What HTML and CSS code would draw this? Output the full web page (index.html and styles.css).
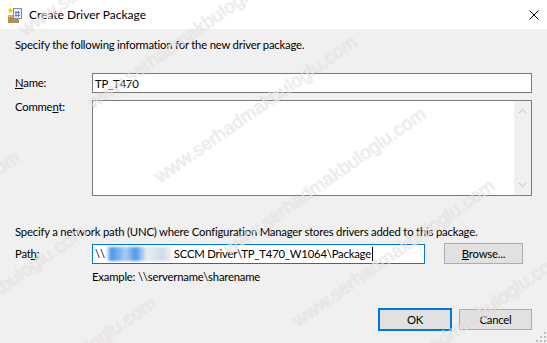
FILE: index.html
```html
<!DOCTYPE html>
<html lang="en">
<head>
    <meta charset="UTF-8">
    <title>Create Driver Package</title>
    <link rel="stylesheet" href="styles.css">
</head>
<body>
    <div class="window">
        <header class="titlebar">
            <svg class="app-icon" width="16" height="16" viewBox="0 0 16 16">
                <rect x="1" y="8" width="11" height="8" fill="#b98d52"/>
                <rect x="1" y="8" width="11" height="2" fill="#d9b47a"/>
                <rect x="6.5" y="1.5" width="8" height="10" fill="#eef3f9" stroke="#7d8fa8"/>
                <path d="M9 4v6M11.5 4v6M8 5.5h5M8 8.5h5" stroke="#4f78b8" stroke-width="0.9"/>
                <path d="M3.5 0.5l0.9 2 2.1 0.2-1.6 1.4 0.5 2.1-1.9-1.1-1.9 1.1 0.5-2.1L0.5 2.7l2.1-0.2z" fill="#f6c400"/>
            </svg>
            <span class="title">Create Driver Package</span>
            <svg class="close" width="10" height="10" viewBox="0 0 10 10">
                <path d="M0.5 0.5l9 9M9.5 0.5l-9 9" stroke="#000" stroke-width="1"/>
            </svg>
        </header>

        <main class="content">
            <p class="intro">Specify the following information for the new driver package.</p>

            <div class="row row-name">
                <label class="label"><u>N</u>ame:</label>
                <div class="textbox">TP_T470</div>
            </div>

            <div class="row row-comment">
                <label class="label">Comme<u>n</u>t:</label>
                <div class="textarea">
                    <div class="scrollbar">
                        <svg class="arrow" width="17" height="17" viewBox="0 0 17 17">
                            <path d="M5 10l3.5-3.5L12 10" fill="none" stroke="#c4c4c4" stroke-width="1"/>
                        </svg>
                        <svg class="arrow" width="17" height="17" viewBox="0 0 17 17">
                            <path d="M5 7l3.5 3.5L12 7" fill="none" stroke="#c4c4c4" stroke-width="1"/>
                        </svg>
                    </div>
                </div>
            </div>

            <p class="intro path-intro">Specify a network path (UNC) where Configuration Manager stores drivers added to this package.</p>

            <div class="row row-path">
                <label class="label">Pat<u>h</u>:</label>
                <div class="textbox focused">\\<span class="masked"></span>SCCM Driver\TP_T470_W1064\Package<span class="caret"></span></div>
                <button class="btn browse" type="button"><u>B</u>rowse...</button>
            </div>

            <p class="example">Example: \\servername\sharename</p>

            <div class="actions">
                <button class="btn default" type="button">OK</button>
                <button class="btn" type="button">Cancel</button>
            </div>
        </main>

        <svg class="grip" width="10" height="10" viewBox="0 0 10 10">
            <rect x="8" y="0" width="2" height="2" fill="#bcbcbc"/>
            <rect x="4" y="4" width="2" height="2" fill="#bcbcbc"/>
            <rect x="8" y="4" width="2" height="2" fill="#bcbcbc"/>
            <rect x="0" y="8" width="2" height="2" fill="#bcbcbc"/>
            <rect x="4" y="8" width="2" height="2" fill="#bcbcbc"/>
            <rect x="8" y="8" width="2" height="2" fill="#bcbcbc"/>
        </svg>

        <!-- site watermark stamped over the screenshot -->
        <div class="watermark">
            <span class="wm wm-1">www.serhadmakbuloglu.com</span>
            <span class="wm wm-2">www.serhadmakbuloglu.com</span>
            <span class="wm wm-3">www.serhadmakbuloglu.com</span>
            <span class="wm wm-4">www.serhadmakbuloglu.com</span>
            <span class="wm wm-5">www.serhadmakbuloglu.com</span>
            <span class="wm wm-6">www.serhadmakbuloglu.com</span>
            <span class="wm wm-7">www.serhadmakbuloglu.com</span>
            <span class="wm wm-8">www.serhadmakbuloglu.com</span>
            <span class="wm wm-9">www.serhadmakbuloglu.com</span>
        </div>
    </div>
</body>
</html>
```

FILE: styles.css
```css
* {
    margin: 0;
    padding: 0;
    box-sizing: border-box;
}

body {
    font-family: Lato, "Liberation Sans", Arial, sans-serif;
    font-size: 11.3px;
    letter-spacing: -0.2px;
    color: #000;
    background: #f0f0f0;
}

.window {
    position: relative;
    width: 547px;
    height: 343px;
    overflow: hidden;
    background: #f0f0f0;
}

.titlebar {
    display: flex;
    align-items: center;
    height: 29px;
    padding-left: 7px;
    background: #fff;
}

.app-icon {
    flex: none;
    margin-right: 6px;
}

.title {
    font-size: 12px;
    line-height: 16px;
    letter-spacing: 0;
}

.close {
    margin-left: auto;
    margin-right: 8px;
}

.content {
    padding: 8px 15px 0 15px;
}

.intro {
    line-height: 16px;
    white-space: nowrap;
}

.row {
    display: flex;
}

.label {
    flex: none;
    width: 77px;
    line-height: 16px;
}

.textbox {
    flex: 1;
    display: flex;
    align-items: center;
    height: 20px;
    padding: 0 2px;
    border: 1px solid #7a7a7a;
    background: #fff;
    white-space: nowrap;
    overflow: hidden;
}

.row-name {
    margin-top: 20px;
    align-items: center;
}

.row-comment {
    margin-top: 7px;
    align-items: flex-start;
}

.row-comment .label {
    margin-top: -1px;
}

.textarea {
    flex: 1;
    display: flex;
    justify-content: flex-end;
    height: 96px;
    border: 1px solid #7a7a7a;
    background: #fff;
}

.scrollbar {
    display: flex;
    flex-direction: column;
    justify-content: space-between;
    width: 17px;
    padding: 2px 0;
    background: #f0f0f0;
}

.arrow {
    display: block;
}

.path-intro {
    margin-top: 28px;
}

.row-path {
    margin-top: 3px;
    align-items: center;
}

.row-path .textbox {
    flex: none;
    width: 333px;
    border-color: #0078d7;
}

.masked {
    display: inline-block;
    flex: none;
    width: 66px;
    height: 14px;
    margin: 0 2px 0 1px;
    background: linear-gradient(90deg, #fff 0, #2a83e6 8%, #9cc4f0 30%, #2f86e4 45%, #e4ecf6 62%, #c9d4e2 85%, #eef1f5 100%);
    filter: blur(1.2px);
    opacity: 0.85;
}

.caret {
    display: inline-block;
    width: 1px;
    height: 14px;
    margin-left: 1px;
    background: #000;
}

.btn {
    font: inherit;
    letter-spacing: inherit;
    color: #000;
    height: 21px;
    border: 1px solid #adadad;
    background: #e1e1e1;
}

.browse {
    flex: none;
    width: 79px;
    margin-left: 19px;
}

.example {
    margin: 5px 0 0 77px;
    line-height: 16px;
}

.actions {
    display: flex;
    justify-content: flex-end;
    gap: 7px;
    margin-top: 24px;
}

.actions .btn {
    width: 73px;
}

.actions .btn.default {
    width: 74px;
    height: 23px;
    margin: -1px 0;
    border: 2px solid #0078d7;
}

.grip {
    position: absolute;
    right: 1px;
    bottom: 1px;
}

.watermark {
    position: absolute;
    inset: 0;
    pointer-events: none;
}

.wm {
    position: absolute;
    font-family: "Liberation Sans", Arial, sans-serif;
    font-size: 19px;
    line-height: 19px;
    letter-spacing: 0;
    white-space: nowrap;
    color: rgba(255, 255, 255, 0.6);
    text-shadow: 0 0 1px rgba(150, 125, 125, 0.4);
    transform: rotate(-35deg);
    transform-origin: 0 100%;
}

.wm-1 { left: 27px; top: 20px; }
.wm-2 { left: 95px; top: 93px; }
.wm-3 { left: -175px; top: 282px; }
.wm-4 { left: 162px; top: 167px; }
.wm-5 { left: -108px; top: 356px; }
.wm-6 { left: 231px; top: 239px; }
.wm-7 { left: -39px; top: 428px; }
.wm-8 { left: 300px; top: 311px; }
.wm-9 { left: 369px; top: 383px; }
```
